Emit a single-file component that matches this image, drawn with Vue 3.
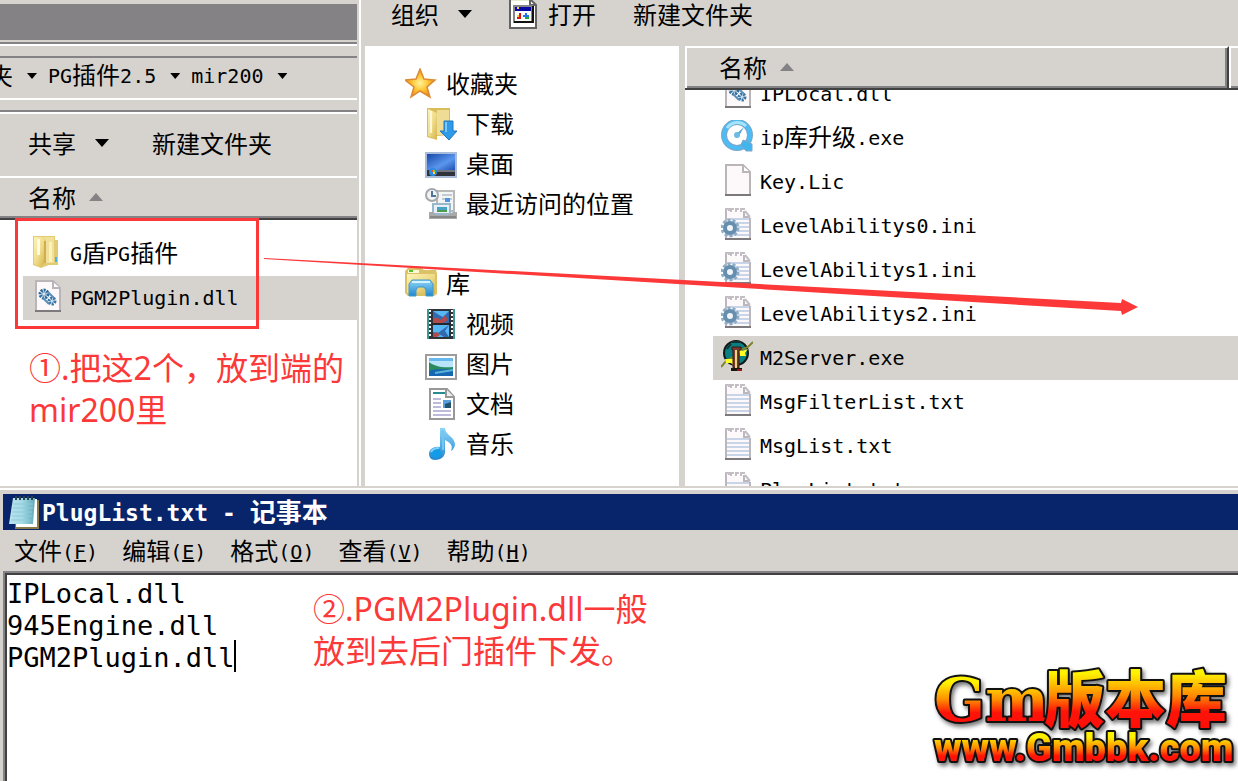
<template>
  <div class="desktop">
    <svg class="sprite" aria-hidden="true">
      <defs>
        <linearGradient id="gold" x1="0" x2="1" y1="0" y2="1">
          <stop offset="0" stop-color="#fdf3b8" />
          <stop offset="0.5" stop-color="#f0dc8a" />
          <stop offset="1" stop-color="#d3b24a" />
        </linearGradient>
        <linearGradient id="sky" x1="0" x2="1" y1="0" y2="1">
          <stop offset="0" stop-color="#1848a8" />
          <stop offset="0.6" stop-color="#5a96ee" />
          <stop offset="1" stop-color="#1e50b4" />
        </linearGradient>
        <linearGradient id="aqua" x1="0" x2="0" y1="0" y2="1">
          <stop offset="0" stop-color="#8fd6f8" />
          <stop offset="1" stop-color="#1f86d0" />
        </linearGradient>
        <radialGradient id="sun">
          <stop offset="0" stop-color="#fff3a0" />
          <stop offset="0.5" stop-color="#ffc938" />
          <stop offset="1" stop-color="#ef8a1c" />
        </radialGradient>
        <linearGradient id="pad" x1="0" x2="1" y1="0" y2="0">
          <stop offset="0" stop-color="#b9e4ee" />
          <stop offset="0.5" stop-color="#a5dae6" />
          <stop offset="1" stop-color="#5fa9bb" />
        </linearGradient>
        <linearGradient id="fire" x1="0" x2="0" y1="0" y2="1">
          <stop offset="0.25" stop-color="#fff200" />
          <stop offset="0.5" stop-color="#ff8a00" />
          <stop offset="0.68" stop-color="#ff1408" />
          <stop offset="1" stop-color="#ff0808" />
        </linearGradient>
      </defs>

      <symbol id="i-folder" viewBox="0 0 32 32">
        <path d="M2 0h22v4h3v25h-9l-8 3-8-3z" fill="#e3cb74" />
        <path d="M3 1h8l3 2v24l-4 4-7-3z" fill="url(#gold)" />
        <path d="M12 1h11v26h-8V4z" fill="#f1e09a" />
        <path d="M6 3h3v16H6z" fill="#fffbe4" />
        <path d="M14 5v22" stroke="#cfae50" stroke-width="2" />
        <path d="M18 6h3v20h-3z" fill="#fbf2c0" />
        <path d="M24 21h2v5h-2z" fill="#4fb0e8" />
      </symbol>

      <symbol id="i-download" viewBox="0 0 32 32">
        <path d="M2 0h23v27l-13 1v4l-10-3z" fill="#d9bd5c" />
        <path d="M12 2h12v25H12z" fill="#efdd96" />
        <path d="M3 1l9 4v26l-9-3z" fill="url(#gold)" />
        <path d="M6 3v22" stroke="#fff7d6" stroke-width="2" />
        <path d="M19 13h9v10h4l-8 9-9-9h4z" fill="#2f9be8" stroke="#2277bd" />
        <path d="M21 14v10" stroke="#7cc8f6" stroke-width="2" />
      </symbol>

      <symbol id="i-star" viewBox="0 0 32 32">
        <path d="M15 1l4 10 11 1-8 7 3 10-10-6-9 6 3-10-9-7 11-1z" fill="url(#sun)" stroke="#dc8a34" stroke-width="1.5" />
      </symbol>

      <symbol id="i-desktop" viewBox="0 0 32 32">
        <path d="M0 4h32v26H0z" fill="#a9bddb" />
        <path d="M2 6h28v16H2z" fill="url(#sky)" />
        <path d="M2 22h28v6H2z" fill="#30343a" />
        <path d="M10 22h20v2H10z" fill="#70757e" />
        <circle cx="8" cy="24" r="4" fill="#2e8be0" />
        <path d="M6 22h2v2H6z" fill="#f0502a" />
        <path d="M8 22h2v2H8z" fill="#7ed33c" />
        <path d="M8 24h2v2H8z" fill="#ffd83a" />
      </symbol>

      <symbol id="i-recent" viewBox="0 0 32 32">
        <path d="M12 3h17v20H12z" fill="#f3f4f4" stroke="#b8baba" stroke-width="2" />
        <path d="M17 7h10M17 11h10" stroke="#c4cad2" stroke-width="2" />
        <path d="M20 10h5v4h-5z" fill="#4c95e4" />
        <path d="M8 16h17v10H8z" fill="#e5f0f8" stroke="#9ab8cc" stroke-width="2" />
        <path d="M12 19h10v5H12z" fill="#48a2c4" />
        <path d="M12 22h10v2H12z" fill="#4f9b4c" />
        <path d="M4 24h4l3 3h12l5-3h4v7H4z" fill="#a9a9a9" />
        <path d="M5 29h26" stroke="#878787" stroke-width="2" />
        <circle cx="7" cy="7" r="6" fill="#f0f3f6" stroke="#a4a8ac" stroke-width="2" />
        <path d="M7 3v5h4" fill="none" stroke="#51749a" stroke-width="2" />
      </symbol>

      <symbol id="i-library" viewBox="0 0 32 32">
        <path d="M0 3l3-3h13l3 2h12l1 4v20l-3 2H3l-3-3z" fill="#dcc266" />
        <path d="M2 6h28v19H2z" fill="url(#gold)" />
        <path d="M3 2h11v3H3z" fill="#fff8d7" />
        <path d="M4 2h4v2H4z" fill="#50c52a" />
        <path d="M4 16l3-4h18l3 4v12h-7v-6l-2-3h-6l-2 3v6H4z" fill="url(#aqua)" stroke="#4298c9" />
        <path d="M7 14h18" stroke="#d5f2ff" stroke-width="2" />
      </symbol>

      <symbol id="i-video" viewBox="0 0 32 32">
        <path d="M2 1h28v30H2z" fill="#303438" />
        <path d="M2 1h2v30H2zM28 1h2v30h-2z" fill="#3d9790" />
        <path d="M8 3h16v12H8zM8 17h16v12H8z" fill="#57b7f4" />
        <path d="M8 3l6 4 4 2 6-6v12H8zM24 17l-4 6 4 6h-5l-5-3-6 3v-5l5 1 4-3z" fill="#316aaf" />
        <path d="M8 10h5l3 2 4-5 3 5-5 3H8zM8 26l4-2 3 3-3 2H8z" fill="#af4b4d" />
        <path d="M5 2v28M27 2v28" stroke="#fff" stroke-width="2" stroke-dasharray="2 2" />
        <path d="M6 16h20" stroke="#24282c" stroke-width="2" />
      </symbol>

      <symbol id="i-picture" viewBox="0 0 32 32">
        <path d="M1 7h30v24H1z" fill="#fff" stroke="#9d9d9d" stroke-width="2" />
        <path d="M4 10h24v18H4z" fill="#b8e5fa" />
        <path d="M4 10h24v3H4z" fill="#65b9ef" />
        <path d="M4 14c5 4 12 6 24 5v4H4z" fill="#2a8b60" />
        <path d="M4 23c8-3 15-1 24-2v7H4z" fill="#1666b2" />
        <path d="M10 25l18-3" stroke="#58b2d9" stroke-width="2" />
      </symbol>

      <symbol id="i-document" viewBox="0 0 32 32">
        <path d="M5 1h17l7 8v22H5z" fill="#fff" stroke="#989898" stroke-width="2" />
        <path d="M21 1v8h8" fill="#eee" stroke="#989898" stroke-width="2" />
        <path d="M8 5h12" stroke="#298b92" stroke-width="2" />
        <path d="M8 11h8M8 15h8M8 19h8M8 23h18M8 27h18" stroke="#bdbadb" stroke-width="2" />
        <path d="M18 12h8v8h-8z" fill="#579fdd" />
        <path d="M20 16l6-2v6h-6z" fill="#25536a" />
      </symbol>

      <symbol id="i-music" viewBox="0 0 32 32">
        <path d="M15 0h5c0 7 9 8 10 16 0 3-2 6-4 7 3-7-3-9-6-11v12c0 5-5 8-10 8-4 0-6-3-6-6 0-5 5-8 11-7z" fill="url(#aqua)" />
        <path d="M18 2v20" stroke="#73c6f0" stroke-width="2" />
        <circle cx="11" cy="25" r="5" fill="#129be7" />
        <path d="M6 24c2-4 5-4 8-4" fill="none" stroke="#7ed1f8" stroke-width="2" />
      </symbol>

      <symbol id="i-page" viewBox="0 0 32 32">
        <path d="M5 1h17l7 7v23H5z" fill="#fdf9fb" stroke="#b9b5b9" stroke-width="2" />
        <path d="M22 2v6h7" fill="#fff" stroke="#b9b5b9" stroke-width="2" />
        <path d="M4 31h26" stroke="#7d7a7e" stroke-width="2" />
      </symbol>

      <symbol id="i-dll" viewBox="0 0 32 32">
        <use href="#i-page" />
        <circle cx="13" cy="14" r="4" fill="#d9e9f4" stroke="#2c6898" stroke-width="3" stroke-dasharray="2 1" />
        <circle cx="13" cy="14" r="2" fill="none" stroke="#759dbe" />
        <circle cx="21" cy="21" r="3" fill="#c7ddec" stroke="#3975a4" stroke-width="3" stroke-dasharray="2 1" />
        <path d="M17 12l6 6M12 18l6 6" stroke="#5b8fb8" stroke-width="2" />
      </symbol>

      <symbol id="i-text" viewBox="0 0 32 32">
        <path d="M4 3h19l7 7v22H4z" fill="#fdf9fb" />
        <path d="M5 31V2M29 10v21M23 3v6h6" fill="none" stroke="#bbb7bd" stroke-width="2" />
        <path d="M4 1h4v2M10 4V1h3M15 4V1h3M20 4V1h4M24 3l5 6" fill="none" stroke="#c2bec4" stroke-width="2" />
        <path d="M6 11h22M6 15h22M6 19h22M6 23h22M6 27h22" stroke="#c8d5e9" stroke-width="2" />
        <path d="M4 31h26" stroke="#7d7a7e" stroke-width="2" />
      </symbol>

      <symbol id="i-ini" viewBox="0 0 32 32">
        <use href="#i-text" />
        <circle cx="9" cy="20" r="8" fill="none" stroke="#8faec6" stroke-width="3" stroke-dasharray="3 2" />
        <circle cx="9" cy="20" r="5" fill="#f1f5f9" stroke="#668eae" stroke-width="4" />
      </symbol>

      <symbol id="i-quicktime" viewBox="0 0 32 32">
        <circle cx="16" cy="15" r="13" fill="#fff" stroke="#7ea6c6" stroke-width="6" />
        <circle cx="16" cy="15" r="13" fill="none" stroke="#4bbcf5" stroke-width="4" />
        <path d="M6 8c5-7 14-7 19-2" fill="none" stroke="#a4e5fd" stroke-width="3" />
        <path d="M22 20l9 4v7h-6l-5-6z" fill="#42b4ee" stroke="#7ea6c6" />
        <path d="M14 15l9-8-5 9-3 2z" fill="#57a9db" />
        <circle cx="16" cy="15" r="3" fill="#70b9e1" />
      </symbol>

      <symbol id="i-server" viewBox="0 0 32 32">
        <circle cx="15" cy="13" r="12" fill="#087f80" stroke="#101818" stroke-width="2" />
        <path d="M6 9l4-5M10 2h10" stroke="#16302f" stroke-width="2" />
        <path d="M0 27l5-6 9-5 8-7 5-2 5-5" fill="none" stroke="#84842a" stroke-width="2" />
        <path d="M4 19h8v-3l3 5-3 4-2-2H5zM18 9l3 2 6-2-3 4 1 3h-6z" fill="#ffff26" />
        <path d="M11 7h9v3h-2v18h-6V10h-1z" fill="#7b382c" stroke="#321b17" />
        <path d="M15 10v18" stroke="#ead487" stroke-width="2" />
        <path d="M10 28h11v3H10z" fill="#191313" />
        <path d="M16 29h5v2h-5z" fill="#9a1515" />
      </symbol>

      <symbol id="i-open" viewBox="0 0 28 30">
        <path d="M1 0h20l6 6v23H1z" fill="#fff" stroke="#636363" stroke-width="2" />
        <path d="M2 0h18v2H2z" fill="#e6ebcf" />
        <path d="M21 0v6h6" fill="none" stroke="#636363" stroke-width="2" />
        <path d="M5 7h18v16H5z" fill="#fff" stroke="#84868c" stroke-width="2" />
        <path d="M6 8h16v4H6z" fill="#0808a2" />
        <path d="M8 8h2v2H8z" fill="#ffd13a" />
        <path d="M5 23h19V7" fill="none" stroke="#111" stroke-width="2" />
        <path d="M8 16h2v2H8z" fill="#ffcf30" />
        <path d="M10 14h2v6H8v-2h2z" fill="#d41616" />
        <path d="M14 16h2v-2h2v2h2v2h-6z" fill="#2474ee" />
        <path d="M16 18h4v2h-4z" fill="#20a83a" />
      </symbol>

      <symbol id="i-notepad" viewBox="0 0 30 34">
        <path d="M7 5h23v29H6z" fill="#8d7a4b" />
        <path d="M8 4h20v28H7z" fill="#fff" />
        <path d="M4 3h22l-2 26H0z" fill="url(#pad)" />
        <path d="M4 9h20M4 13h20M3 17h20M3 21h20M2 25h20" stroke="#8fc9d8" />
        <path d="M7 1v4M11 1v4M15 1v4M19 1v4M23 1v4" stroke="#27414c" stroke-width="2" />
      </symbol>
    </svg>

    <div class="explorers">
      <section class="window source">
        <div class="caption"></div>
        <nav class="address">
          <button type="button"><Mixed text="夹" /></button>
          <i class="caret-small"></i>
          <button type="button"><Mixed text="PG插件2.5" /></button>
          <i class="caret-small"></i>
          <button type="button"><Mixed text="mir200" /></button>
          <i class="caret-small"></i>
        </nav>
        <div class="toolbar">
          <button type="button">共享<i class="caret-down"></i></button>
          <button type="button">新建文件夹</button>
        </div>
        <button type="button" class="column-head">名称<i class="caret-up"></i></button>
        <ul class="files">
          <li v-for="file in sourceFiles" :key="file.name" :class="{ selected: file.selected }">
            <svg class="icon"><use :href="`#i-${file.icon}`" /></svg>
            <Mixed :text="file.name" />
          </li>
        </ul>
        <div class="frame"></div>
        <p class="note note-source">①.把这2个，放到端的<br />mir200里</p>
      </section>

      <section class="window target">
        <div class="toolbar">
          <button type="button">组织<i class="caret-down"></i></button>
          <button type="button" class="open"><svg class="open-icon"><use href="#i-open" /></svg>打开</button>
          <button type="button">新建文件夹</button>
        </div>
        <div class="body">
          <nav class="places">
            <div v-for="group in places" :key="group.name" class="group">
              <a href="#">
                <svg class="icon"><use :href="`#i-${group.icon}`" /></svg>{{ group.name }}
              </a>
              <a v-for="item in group.items" :key="item.name" href="#" class="child">
                <svg class="icon"><use :href="`#i-${item.icon}`" /></svg>{{ item.name }}
              </a>
            </div>
          </nav>
          <div class="listing">
            <div class="columns">
              <button type="button" class="column">名称<i class="caret-up"></i></button>
              <div class="column rest"></div>
            </div>
            <ul class="files scrolled">
              <li v-for="file in targetFiles" :key="file.name" :class="{ selected: file.selected }">
                <svg class="icon"><use :href="`#i-${file.icon}`" /></svg>
                <Mixed :text="file.name" />
              </li>
            </ul>
          </div>
        </div>
      </section>

      <svg class="arrow" viewBox="0 0 876 60" aria-hidden="true">
        <polygon points="0,8 857,53 858,49 874,57 858,65 857,61 0,9" />
      </svg>
    </div>

    <section class="notepad">
      <header class="title">
        <svg class="title-icon"><use href="#i-notepad" /></svg>
        <Mixed text="PlugList.txt - 记事本" />
      </header>
      <div class="menu">
        <button v-for="item in menu" :key="item.key" type="button">{{ item.label }}<span class="latin">(<u>{{ item.key }}</u>)</span></button>
      </div>
      <div class="editor">
        <textarea v-model="content" aria-label="PlugList.txt" spellcheck="false"></textarea>
        <i class="cursor"></i>
        <p class="note note-editor">②.PGM2Plugin.dll一般<br />放到去后门插件下发。</p>
        <svg class="logo" viewBox="0 0 310 112">
          <text class="logo-gm" x="6" y="55">Gm</text>
          <text class="logo-name" x="116" y="56">版本库</text>
          <text class="logo-url" x="6" y="95">www.Gmbbk.com</text>
        </svg>
      </div>
    </section>
  </div>
</template>

<script setup>
import { h, ref } from 'vue'

// Latin letters are half as wide as a Chinese character, so they get their own span
const Mixed = (props) => h(
  'span',
  props.text
    .match(/[\x20-\x7e]+|[^\x20-\x7e]+/g)
    .map((run) => h('span', { class: { latin: run.charCodeAt(0) < 127 } }, run))
)
Mixed.props = ['text']

const sourceFiles = [
  { name: 'G盾PG插件', icon: 'folder' },
  { name: 'PGM2Plugin.dll', icon: 'dll', selected: true }
]

const targetFiles = [
  { name: 'IPLocal.dll', icon: 'dll' },
  { name: 'ip库升级.exe', icon: 'quicktime' },
  { name: 'Key.Lic', icon: 'page' },
  { name: 'LevelAbilitys0.ini', icon: 'ini' },
  { name: 'LevelAbilitys1.ini', icon: 'ini' },
  { name: 'LevelAbilitys2.ini', icon: 'ini' },
  { name: 'M2Server.exe', icon: 'server', selected: true },
  { name: 'MsgFilterList.txt', icon: 'text' },
  { name: 'MsgList.txt', icon: 'text' },
  { name: 'PlugList.txt', icon: 'text' }
]

const places = [
  {
    name: '收藏夹',
    icon: 'star',
    items: [
      { name: '下载', icon: 'download' },
      { name: '桌面', icon: 'desktop' },
      { name: '最近访问的位置', icon: 'recent' }
    ]
  },
  {
    name: '库',
    icon: 'library',
    items: [
      { name: '视频', icon: 'video' },
      { name: '图片', icon: 'picture' },
      { name: '文档', icon: 'document' },
      { name: '音乐', icon: 'music' }
    ]
  }
]

const menu = [
  { label: '文件', key: 'F' },
  { label: '编辑', key: 'E' },
  { label: '格式', key: 'O' },
  { label: '查看', key: 'V' },
  { label: '帮助', key: 'H' }
]

const content = ref('IPLocal.dll\n945Engine.dll\nPGM2Plugin.dll')
</script>

<style>
body {
  margin: 0;
  overflow: hidden;
}
.latin {
  font-family: "DejaVu Sans Mono", monospace;
  font-size: 20px;
  vertical-align: 1px;
  white-space: pre;
}
.title .latin {
  font-size: 23px;
}
</style>

<style scoped>
.desktop {
  display: grid;
  grid-template-rows: minmax(0, 486fr) minmax(0, 295fr);
  height: 100vh;
  background: #d6d3ce;
  color: #000;
  font-family: "Noto Sans CJK SC", sans-serif;
  font-size: 24px;
  line-height: 40px;
}
.sprite {
  position: absolute;
  width: 0;
  height: 0;
}
button {
  padding: 0;
  border: 0;
  background: none;
  color: inherit;
  font: inherit;
  white-space: nowrap;
}
ul {
  margin: 0;
  padding: 0;
  list-style: none;
}
.explorers {
  position: relative;
  display: grid;
  grid-template-columns: minmax(0, 365fr) minmax(0, 873fr);
}
.window {
  display: flex;
  flex-direction: column;
  min-width: 0;
  min-height: 0;
}
.source {
  position: relative;
  margin-right: 4px;
  border-right: 2px solid #fff;
  box-shadow: inset -2px 0 #d6d3ce;
  padding-right: 2px;
  background: #fff;
}
.caption {
  height: 36px;
  border-top: 4px solid #d6d3ce;
  border-bottom: 2px solid #d6d3ce;
  background: #848284;
}
.address {
  display: flex;
  align-items: center;
  height: 32px;
  padding: 15px 0 7px;
  border-top: 2px solid #848284;
  border-bottom: 2px solid #fff;
  overflow: hidden;
  box-shadow: inset 0 2px #fff, inset 0 12px #d6d3ce, inset 0 14px #848284;
  background: #d6d3ce;
}
.address button:first-child {
  margin-left: -11px;
}
.address .caret-small {
  margin: 2px 11px 0 14px;
}
.toolbar {
  display: flex;
  align-items: center;
}
.source .toolbar {
  height: 66px;
  padding: 10px 0 0 28px;
  gap: 43px;
  border-bottom: 2px solid #fff;
  background: #d6d3ce;
  box-shadow: inset 0 10px #d6d3ce, inset 0 12px #848284, inset 0 14px #fff;
}
.toolbar button {
  display: flex;
  align-items: center;
}
.caret-small,
.caret-down {
  flex: none;
  width: 14px;
  height: 8px;
  background: #000;
  clip-path: polygon(0 0, 100% 0, 50% 100%);
}
.caret-small {
  width: 10px;
  height: 6px;
}
.caret-down {
  margin-left: 19px;
}
.caret-up {
  width: 14px;
  height: 8px;
  margin-left: 13px;
  background: #848284;
  clip-path: polygon(50% 0, 100% 100%, 0 100%);
}
.column-head {
  display: flex;
  align-items: center;
  height: 42px;
  padding: 0 0 2px 28px;
  border-bottom: 2px solid #424142;
  box-shadow: inset 0 -2px #848284;
  background: #d6d3ce;
}
.files {
  padding: 12px 0 0 23px;
}
.files li {
  display: flex;
  gap: 7px;
  height: 44px;
  padding-left: 8px;
  line-height: 40px;
  white-space: nowrap;
}
.files .selected {
  background: #d6d3ce;
}
.icon {
  flex: none;
  width: 32px;
  height: 32px;
  margin-top: 4px;
}
.frame {
  position: absolute;
  top: 218px;
  left: 15px;
  width: 238px;
  height: 105px;
  border: 3px solid #fc3838;
}
.note {
  margin: 0;
  color: #fc3838;
  font-family: "Noto Sans", "Noto Sans CJK SC", sans-serif;
  font-size: 32px;
  line-height: 42px;
  white-space: nowrap;
}
.note-source {
  padding: 27px 0 0 29px;
}
.target .toolbar {
  height: 46px;
  padding: 0 0 0 26px;
  gap: 37px;
  align-items: flex-start;
}
.target .toolbar button {
  height: 28px;
}
.open-icon {
  width: 28px;
  height: 30px;
  margin-right: 11px;
}
.body {
  display: grid;
  flex: 1;
  grid-template-columns: minmax(0, 314fr) minmax(0, 553fr);
  gap: 6px;
  min-height: 0;
}
.places {
  padding: 18px 0 0 40px;
  overflow: hidden;
  background: #fff;
}
.group {
  margin-bottom: 40px;
}
.places a {
  display: flex;
  gap: 9px;
  height: 40px;
  color: inherit;
  line-height: 38px;
  text-decoration: none;
  white-space: nowrap;
}
.places .child {
  padding-left: 20px;
}
.listing {
  display: flex;
  flex-direction: column;
  min-height: 0;
  overflow: hidden;
  background: #fff;
}
.columns {
  position: relative;
  z-index: 1;
  display: flex;
  flex: none;
  height: 42px;
  border-bottom: 2px solid #424142;
  background: #d6d3ce;
}
.column {
  display: flex;
  flex: 1;
  align-items: center;
  padding: 0 0 2px 32px;
  border: solid #fff;
  border-width: 2px 0 0 2px;
  border-right: 2px solid #424142;
  box-shadow: inset -2px -2px #848284;
}
.rest {
  flex: 0 0 7px;
  padding: 0;
  border-right: 0;
  box-shadow: inset 0 -2px #848284;
}
.files.scrolled {
  margin-top: -18px;
  padding: 0 0 0 28px;
}
.arrow {
  position: absolute;
  top: 250px;
  left: 264px;
  width: 876px;
  height: 60px;
  overflow: visible;
  fill: #fc3838;
}
.notepad {
  display: flex;
  flex-direction: column;
  min-height: 0;
  padding-left: 3px;
  border-top: 2px solid #d6d3ce;
  box-shadow: inset 0 2px #fff;
}
.title {
  display: flex;
  align-items: center;
  height: 36px;
  margin-top: 6px;
  padding-left: 6px;
  gap: 3px;
  background: #08246b;
  color: #fff;
  font-size: 26px;
  font-weight: bold;
  line-height: 36px;
  white-space: nowrap;
}
.title-icon {
  width: 30px;
  height: 34px;
}
.menu {
  display: flex;
  gap: 24px;
  height: 39px;
  padding: 0 0 2px 11px;
}
.editor {
  position: relative;
  display: flex;
  flex: 1;
  border: solid #848284;
  border-width: 2px 0 0 2px;
  background: #fff;
}
textarea {
  flex: 1;
  padding: 3px 0;
  border: solid #424142;
  border-width: 2px 0 0 2px;
  outline: none;
  resize: none;
  background: none;
  color: #000;
  font: 27px/32px "DejaVu Sans Mono", monospace;
}
.cursor {
  position: absolute;
  top: 67px;
  left: 229px;
  width: 2px;
  height: 32px;
  background: #000;
}
.note-editor {
  position: absolute;
  top: 15px;
  left: 308px;
}
.logo {
  position: absolute;
  right: 0;
  bottom: 3px;
  width: 310px;
  height: 112px;
  fill: url(#fire);
  stroke: #111;
  stroke-width: 4px;
  stroke-linejoin: round;
  paint-order: stroke;
  filter: drop-shadow(2px 3px 2px #0008);
}
.logo-gm {
  font: bold 60px "DejaVu Serif", serif;
}
.logo-name {
  font: 900 61px "Noto Sans CJK SC", sans-serif;
}
.logo-url {
  font: 900 38px Roboto, sans-serif;
}
</style>
